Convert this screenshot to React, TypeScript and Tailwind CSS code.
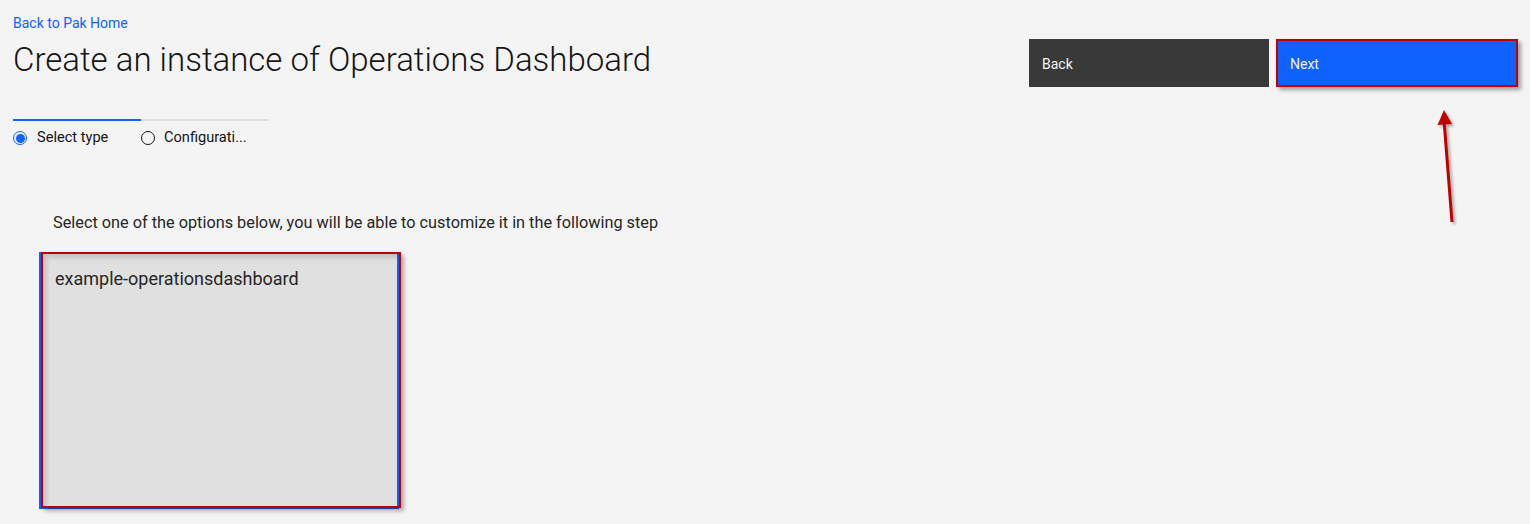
import React from 'react';

const App: React.FC = () => {
  return (
    <div className="relative min-h-screen bg-[#f4f4f4] font-['Roboto',sans-serif] text-[#161616]">
      <div className="flex items-start justify-between pl-[13px] pr-[12px] pt-[14px]">
        <div>
          <a href="#" className="block text-[14px] leading-[18px] text-[#0f62fe]">Back to Pak Home</a>
          <h1 className="mt-[8px] text-[33px] font-light leading-[40px] text-[#161616]">
            Create an instance of Operations Dashboard
          </h1>

          <div className="mt-[39px] w-[256px]">
            <div className="flex h-[2px]">
              <div className="w-[128px] bg-[#0f62fe]" />
              <div className="flex-1 bg-[#e0e0e0]" />
            </div>
            <div className="mt-[7px] flex h-[20px] items-center text-[14.6px]">
              <div className="flex w-[128px] items-center gap-[10px]">
                <span className="flex h-[14px] w-[14px] items-center justify-center rounded-full border-[1.5px] border-[#0f62fe]">
                  <span className="h-[9px] w-[9px] rounded-full bg-[#0f62fe]" />
                </span>
                <span>Select type</span>
              </div>
              <div className="flex items-center gap-[9px]">
                <span className="h-[14px] w-[14px] rounded-full border-[1.5px] border-[#161616]" />
                <span>Configurati...</span>
              </div>
            </div>
          </div>
        </div>
        <div className="flex items-start gap-[7px] pt-[25px]">
          <button className="h-[48px] w-[240px] bg-[#393939] pl-[13px] pt-[2px] text-left text-[14px] text-[#f4f4f4]">Back</button>
          <button className="h-[48px] w-[242px] border-2 border-[#c00000] bg-[#0f62fe] pl-[12px] pt-[2px] text-left text-[14px] text-[#f4f4f4] shadow-[3px_3px_4px_rgba(0,0,0,0.35)]">
            Next
          </button>
        </div>
      </div>

      <p className="ml-[53px] mt-[64px] text-[16.3px] leading-[22px] text-[#262626]">
        Select one of the options below, you will be able to customize it in the following step
      </p>

      <div className="relative ml-[39px] mt-[18px] h-[257px] w-[360px] border-2 border-[#0f62fe] bg-[#e0e0e0] pl-[14px] pt-[14px]">
        <span className="text-[18px] leading-[22px] text-[#262626]">example-operationsdashboard</span>
        <div className="pointer-events-none absolute -right-[4px] -top-[2px] -bottom-[1px] left-0 border-2 border-[#c00000] shadow-[3px_3px_4px_rgba(0,0,0,0.3),inset_4px_4px_4px_rgba(0,0,0,0.12)]" />
      </div>

      <svg className="absolute left-[1430px] top-[104px]" width="32" height="128" viewBox="0 0 32 128">
        <defs>
          <filter id="sh" x="-50%" y="-20%" width="200%" height="140%">
            <feDropShadow dx="2" dy="2" stdDeviation="1.5" floodColor="#000" floodOpacity="0.35" />
          </filter>
        </defs>
        <g filter="url(#sh)">
          <line x1="22" y1="118" x2="14" y2="16" stroke="#c00000" strokeWidth="3" />
          <polygon points="14,6 7.5,21 22,20" fill="#c00000" />
        </g>
      </svg>
    </div>
  );
};

export default App;
